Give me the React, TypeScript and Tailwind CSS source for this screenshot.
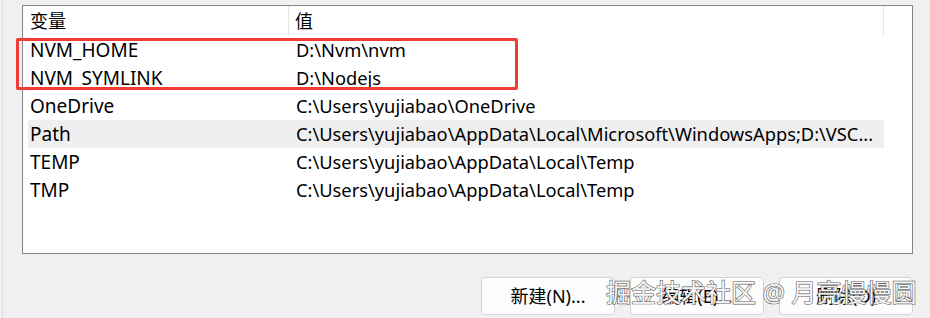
const rows = [
  { name: "NVM_HOME", value: "D:\\Nvm\\nvm" },
  { name: "NVM_SYMLINK", value: "D:\\Nodejs" },
  { name: "OneDrive", value: "C:\\Users\\yujiabao\\OneDrive" },
  { name: "Path", value: "C:\\Users\\yujiabao\\AppData\\Local\\Microsoft\\WindowsApps;D:\\VSC...", selected: true },
  { name: "TEMP", value: "C:\\Users\\yujiabao\\AppData\\Local\\Temp" },
  { name: "TMP", value: "C:\\Users\\yujiabao\\AppData\\Local\\Temp" },
];

const buttons = ["新建(N)...", "编辑(E)...", "删除(D)"];

export default function App() {
  return (
    <div className="relative h-[318px] w-[930px] overflow-hidden bg-[#f0f0f0] font-['Noto_Sans','Noto_Sans_CJK_SC',sans-serif] text-black">
      <div className="ml-[2px] h-full border-l border-[#dcdcdc] pt-[5px]">
        {/* list view */}
        <div className="ml-[19px] h-[249px] w-[891px] border border-[#858585] bg-white pl-[5px]">
          <div className="flex h-[30px] text-[18px] leading-[30px]">
            <div className="w-[261px] border-r border-[#e5e5e5] pl-[2px]">变量</div>
            <div className="w-[595px] border-r border-[#e5e5e5] pl-[6px]">值</div>
          </div>
          {rows.map((r) => (
            <div
              key={r.name}
              className={`flex h-[28px] w-[856px] leading-[28px] ${r.selected ? "bg-[#efefef]" : ""}`}
            >
              <div className="w-[261px] whitespace-nowrap pl-[2px] text-[19px]">{r.name}</div>
              <div className="w-[595px] overflow-hidden whitespace-nowrap pl-[7px] text-[18.3px]">{r.value}</div>
            </div>
          ))}
        </div>

        <div className="mt-[23px] flex justify-end gap-[15px] pr-[17px]">
          {buttons.map((b) => (
            <div
              key={b}
              className="flex h-[38px] w-[134px] items-center justify-center rounded-[4px] border border-[#d3d3d3] bg-[#fdfdfd] text-[18px]"
            >
              {b}
            </div>
          ))}
        </div>
      </div>

      {/* red highlight box */}
      <div className="absolute left-[16px] top-[38px] h-[52px] w-[502px] rounded-[2px] border-[3px] border-[#ee3b34]" />

      {/* watermark */}
      <div className="absolute left-[606px] top-[274px] whitespace-nowrap text-[25px] leading-[36px] text-[#f7f7f7] [-webkit-text-stroke:1.2px_#5e5e5e] [paint-order:stroke_fill]">
        掘金技术社区 @ 月亮慢慢圆
      </div>
    </div>
  );
}
